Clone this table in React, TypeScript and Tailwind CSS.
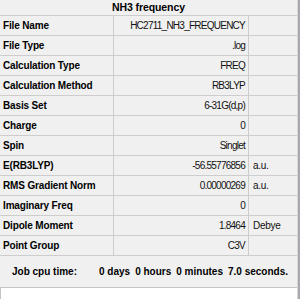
import React from "react";

type Row = { label: string; value: string; unit?: string };

const ROWS: Row[] = [
  { label: "File Name", value: "HC2711_NH3_FREQUENCY" },
  { label: "File Type", value: ".log" },
  { label: "Calculation Type", value: "FREQ" },
  { label: "Calculation Method", value: "RB3LYP" },
  { label: "Basis Set", value: "6-31G(d,p)" },
  { label: "Charge", value: "0" },
  { label: "Spin", value: "Singlet" },
  { label: "E(RB3LYP)", value: "-56.55776856", unit: "a.u." },
  { label: "RMS Gradient Norm", value: "0.00000269", unit: "a.u." },
  { label: "Imaginary Freq", value: "0" },
  { label: "Dipole Moment", value: "1.8464", unit: "Debye" },
  { label: "Point Group", value: "C3V" },
];

export default function App() {
  return (
    <div
      className="w-[300px] h-[299px] flex bg-[#f0f0f0] text-black overflow-hidden"
      style={{ fontFamily: '"Liberation Sans", Arial, sans-serif' }}
    >
      {/* panel body */}
      <div className="w-[297px] flex flex-col">
        {/* title */}
        <div className="h-[16px] flex items-center justify-center border-b border-[#cdcdcd] text-[10.5px] font-bold tracking-[-0.1px]">
          NH3 frequency
        </div>

        {/* property grid */}
        <div className="flex flex-col">
          {ROWS.map((r) => (
            <div key={r.label} className="h-[20px] flex border-b border-[#cdcdcd]">
              <div className="w-[114px] shrink-0 border-r border-[#cdcdcd] pl-[3px] flex items-center text-[10px] font-bold tracking-[-0.15px]">
                {r.label}
              </div>
              <div className="w-[135px] shrink-0 border-r border-[#cdcdcd] pr-[3px] flex items-center justify-end text-[10px] tracking-[-0.75px] text-[#111]">
                {r.value}
              </div>
              <div className="flex-1 pl-[4px] flex items-center text-[10px] tracking-[-0.3px] text-[#111]">
                {r.unit}
              </div>
            </div>
          ))}
        </div>

        {/* cpu time footer */}
        <div className="h-[32px] flex items-center text-[10px] font-bold border-b border-[#c4c4c4]">
          <span className="pl-[12px] w-[99px] shrink-0">Job cpu time:</span>
          <div className="flex gap-[5px]">
            <span>0 days</span>
            <span>0 hours</span>
            <span>0 minutes</span>
            <span>7.0 seconds.</span>
          </div>
        </div>

        <div className="flex-1 bg-white border-l border-[#c4c4c4]" />
      </div>

      {/* right frame edge */}
      <div className="w-[3px] flex">
        <div className="w-[1px] bg-[#d8d8d8]" />
        <div className="w-[2px] bg-[#a8a8b0]" />
      </div>
    </div>
  );
}
